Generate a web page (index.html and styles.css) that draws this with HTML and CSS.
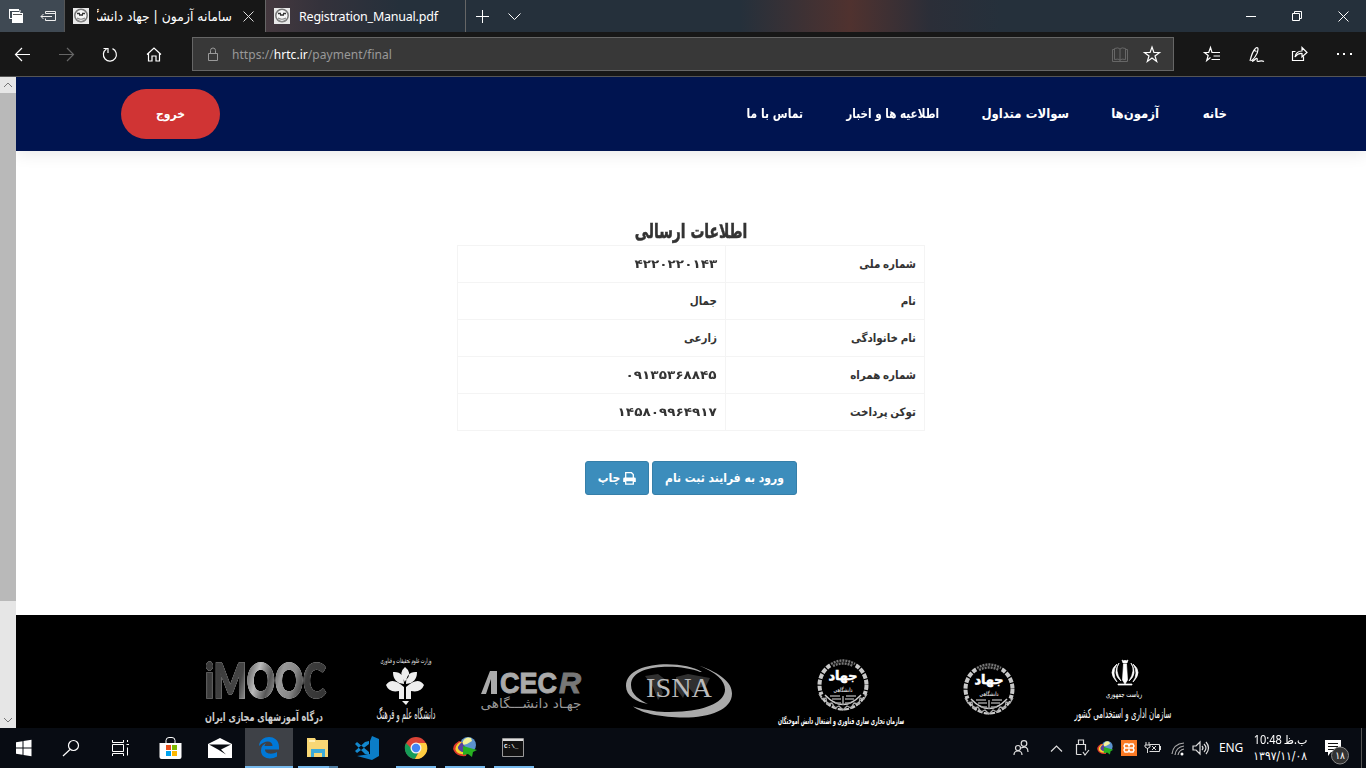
FILE: index.html
```html
<!DOCTYPE html>
<html lang="fa">
<head>
<meta charset="utf-8">
<title>سامانه آزمون | جهاد دانشگاهی</title>
<link rel="stylesheet" href="styles.css">
</head>
<body>
<svg class="defs" width="0" height="0">
  <defs>
    <g id="seal" fill="none" stroke="#ddd">
      <circle cx="25" cy="25" r="23.5" stroke-width="4" stroke-dasharray="5 1.2" pathLength="148" stroke="#c9c9c9"/>
      <path d="M12 5Q25-2 38 5" stroke="#000" stroke-width="6"/>
      <path d="M13 4Q25-3 37 4M15 6Q25 1 35 6" stroke="#777" stroke-width="2.4" stroke-dasharray="2 1"/>
      <path d="M3 35Q25 62 47 35L43 33Q25 53 7 33Z" fill="#000" stroke="none"/>
      <path d="M1 34l3 5 4-1 1 6 5-1 3 5 4-2 4 4 4-4 4 2 3-5 5 1 1-6 4 1 3-5" stroke="#aaa" stroke-width="1.3"/>
      <path d="M7 35Q25 54 43 35" stroke="#ccc" stroke-width="1.5"/>
      <path d="M12 36h10M28 36h10M14 39h9M27 39h9M17 43h6M27 43h6M25 36v9" stroke="#999" stroke-width="1.600"/>
      <text x="25" y="20" text-anchor="middle" textLength="29" lengthAdjust="spacingAndGlyphs" font-size="13" font-weight="bold" fill="#fff" stroke="#fff" stroke-width=".5">جهاد</text>
      <text x="25" y="32" text-anchor="middle" textLength="19" lengthAdjust="spacingAndGlyphs" font-size="6" font-weight="bold" fill="#ccc" stroke="none">دانشگاهی</text>
    </g>
    <g id="fav">
      <rect width="16" height="16" fill="#e9e9e9"/>
      <circle cx="8" cy="7.5" r="6.2" fill="#f6f6f6" stroke="#777" stroke-width="1.5"/>
      <path d="M4 5.500h3M9 5.500h3M6 7h4" stroke="#333" stroke-width="1.400"/>
      <path d="M4 10q4 2.500 8 0M4 12.500q4 2 8 0" stroke="#888" fill="none" stroke-width="1.200"/>
    </g>
    <g id="idm">
      <circle cx="15" cy="8" r="8" fill="#5b93cf"/>
      <path d="M10 4q3-5 8-3l1 3-5 3-4 1z" fill="#f4f29a"/>
      <path d="M6 4Q-2 9 1 14q3 6 12 5l1-4Q4 14 9 5z" fill="#e03a2c"/>
      <path d="M7 5Q1 9 3 14q3 4 10 3v-3Q6 12 10 5z" fill="#f4d530"/>
      <path d="M9 5Q3 10 6 13q3 3 7 2V11L10 7z" fill="#5a3fa0"/>
      <path d="M10 9l14 4-4 2-1 5-4-3-5 1z" fill="#27b021"/>
    </g>
  </defs>
</svg>

<div class="tabbar">
  <svg class="tab-tools" width="64" height="32" fill="none" stroke="#fff">
    <path d="M9 9h10v2H9zM12 13h11v10H12z" fill="#fff" stroke="none"/><path d="M9.500 10v8.500H12M12 12.500h8V10M13 15h9" /><path d="M13 14.500h9" stroke="#555"/>
    <path d="M45.500 13.500v-2h10v9h-10v-2M45.500 13.500h10M52 16.500H41M43.500 14L41 16.500l2.500 2.500" stroke="#eee"/>
  </svg>
  <div class="tab tab-active">
    <svg width="16" height="16"><use href="#fav"/></svg>
    <span class="tab-fa" dir="rtl">سامانه آزمون | جهاد دانشگاهی</span>
    <svg class="tab-close" width="11" height="11" stroke="#ddd"><path d="M.5.5l10 10M10.500.5l-10 10"/></svg>
  </div>
  <div class="tab tab-idle">
    <svg width="16" height="16"><use href="#fav"/></svg>
    <span class="tab-name">Registration_Manual.pdf</span>
  </div>
  <svg width="80" height="32" viewBox="466 0 80 32" fill="none" stroke="#fff"><path d="M482.500 10v13M476 16.500h13M508.500 13.500l6 6 6-6"/></svg>
  <svg class="win" width="140" height="32" viewBox="1226 0 140 32" fill="none" stroke="#fff"><path d="M1246 16.500h10M1292.500 13.500h7v7h-7zM1294.500 13v-1.500h7v7H1300M1338.500 11.500l10 10M1348.500 11.500l-10 10"/></svg>
</div>

<div class="toolbar">
  <svg width="192" height="44" viewBox="0 32 192 44" fill="none" stroke="#fff" stroke-width="1.200">
    <path d="M30 54.500H16M22 48l-6.500 6.500L22 61"/>
    <path d="M59 54.500h14M67 48l6.500 6.500L67 61" stroke="#666"/>
    <path d="M112.500 48.600a6.500 6.500 0 1 1-6 .4M103.500 48.500h4.500v4.500"/>
    <path d="M147 54.500l7-6.500 7 6.500M148.500 53.500v7.500h3.500v-5h4v5h3.500v-7.500"/>
  </svg>
  <div class="address">
    <svg width="39" height="32" viewBox="193 38 39 32" fill="none" stroke="#999"><path d="M208.500 53.500h9v7h-9zM210.500 53v-2.500q0-2.500 2.500-2.500t2.500 2.500V53"/></svg>
    <span class="url">https://<b>hrtc.ir</b>/payment/final</span>
    <svg class="addr-tools" width="64" height="32" viewBox="1109 38 64 32" fill="none" stroke="#666">
      <path d="M1114 49.500h-1.500v12h15v-12h-1.500M1114.500 48.500q4-1.500 5.500.5 1.500-2 5.500-.5v11q-4-1-5.500.5-1.500-1.500-5.500-.5zM1120 49v12"/>
      <path d="M1152 47l1.900 5.500h5.600l-4.500 3.400 1.700 5.600-4.700-3.400-4.700 3.400 1.700-5.600-4.500-3.400h5.600z" stroke="#fff" stroke-width="1.200"/>
    </svg>
  </div>
  <svg width="192" height="44" viewBox="1174 32 192 44" fill="none" stroke="#fff" stroke-width="1.200">
    <path d="M1213 52.500h-1l-1.500-5-1.800 5h-4.200l3.700 3-1.500 5 3.800-3M1212 52.500h8M1213.500 56h6.500M1211.500 59.500h8.500"/>
    <path d="M1251 60.500c2 0 7-7 7-11 0-3-2-2-3-.5-3 3-4 8-5 12M1254.500 50.500l2 1M1252 61.500c3-1 4-4 5-3s-1 3 1 3 3-1.500 6 0" stroke-width="1.200"/>
    <path d="M1295.500 51.500h-3v9h11v-4M1295 57q1-6 7-6v-3.500l5 5-5 4.500v-3.500q-4-.5-7 3.500z"/>
    <path d="M1337 54h2M1343 54h2M1350 54h2" stroke-width="2"/>
  </svg>
</div>

<div class="view">
  <div class="scrollbar">
    <svg width="16" height="16" fill="none" stroke="#777"><path d="M4 10l4-4 4 4"/></svg>
    <div class="thumb"></div>
    <svg width="16" height="16" fill="none" stroke="#777"><path d="M4 6l4 4 4-4"/></svg>
  </div>
  <div class="page" dir="rtl">
    <header class="header">
      <nav class="nav">
        <a class="n1">خانه</a><a class="n2">آزمون‌ها</a><a class="n3">سوالات متداول</a><a class="n4">اطلاعیه ها و اخبار</a><a class="n5">تماس با ما</a>
      </nav>
      <a class="logout">خروج</a>
    </header>
    <main class="main">
      <h1 class="title">اطلاعات ارسالی</h1>
      <table class="info">
        <tr><td>شماره ملی</td><td><span class="num">۴۲۲۰۲۲۰۱۴۳</span></td></tr>
        <tr><td>نام</td><td>جمال</td></tr>
        <tr><td>نام خانوادگی</td><td>زارعی</td></tr>
        <tr><td>شماره همراه</td><td><span class="num">۰۹۱۳۵۳۶۸۸۴۵</span></td></tr>
        <tr><td>توکن پرداخت</td><td><span class="num">۱۴۵۸۰۹۹۶۴۹۱۷</span></td></tr>
      </table>
      <div class="actions">
        <a class="btn btn-wide">ورود به فرایند ثبت نام</a>
        <a class="btn btn-print"><svg width="13" height="13" fill="none" stroke="#fff" stroke-width="1.300"><path d="M2.700 6V.7h5.800l1.800 1.800V6M2.700 8.500h7.600v3.700H2.700z"/><path d="M.2 10V6.800Q.2 5.500 1.500 5.500h10q1.300 0 1.300 1.300V10h-2.500V8H2.700v2z" fill="#fff" stroke="none"/></svg><span>چاپ</span></a>
      </div>
    </main>
    <footer class="footer" dir="ltr">
      <svg width="150" height="113" viewBox="200 615 150 113">
        <defs><linearGradient id="mg" gradientUnits="userSpaceOnUse" x1="205" y1="665" x2="327" y2="700"><stop offset="0" stop-color="#383838"/><stop offset=".3" stop-color="#444"/><stop offset=".42" stop-color="#bbb"/><stop offset=".52" stop-color="#555"/><stop offset=".6" stop-color="#999"/><stop offset=".7" stop-color="#888"/><stop offset=".8" stop-color="#3c3c3c"/><stop offset="1" stop-color="#333"/></linearGradient></defs>
        <text class="mooc" x="205" y="698" font-size="47" textLength="121" lengthAdjust="spacingAndGlyphs" fill="url(#mg)" stroke="url(#mg)" stroke-width="1.500">iMOOC</text>
        <text x="264" y="721" text-anchor="middle" font-size="12" font-weight="bold" textLength="118" lengthAdjust="spacingAndGlyphs" fill="#ccc">درگاه آموزشهای مجازی ایران</text>
      </svg>
      <svg width="110" height="113" viewBox="350 615 110 113" fill="#eee">
        <text x="406" y="663" text-anchor="middle" font-size="7" textLength="51" lengthAdjust="spacingAndGlyphs">وزارت علوم تحقیقات و فناوری</text>
        <path d="M405 667q8 6 1 13-1 1-1 2-1-1-1-2-6-7 1-13zM393 672q11-1 11 12-11-1-11-12zM417 672q-11-1-11 12 11-1 11-12zM386 685q6-9 18 2v12h-5v-8q-10 2-13-6zM424 685q-6-9-18 2v12h5v-8q10 2 13-6zM402 701h7l-3 4z"/>
        <text x="406" y="719" text-anchor="middle" font-size="14" textLength="59" lengthAdjust="spacingAndGlyphs">دانشگاه علم و فرهنگ</text>
      </svg>
      <svg width="140" height="113" viewBox="460 615 140 113" fill="#aaa">
        <path d="M481 694l9-23h7v23h-6v-15l-5 15z"/>
        <text x="500" y="693" font-size="30" font-weight="bold" font-family="Liberation Sans" textLength="57" lengthAdjust="spacingAndGlyphs" stroke="#aaa">CEC</text>
        <text x="559" y="693" font-size="30" font-weight="bold" font-style="italic" font-family="Liberation Sans" textLength="22" lengthAdjust="spacingAndGlyphs" fill="#777" stroke="#777">R</text>
        <text x="531" y="708" text-anchor="middle" font-size="13" textLength="101" lengthAdjust="spacingAndGlyphs" fill="#999">جهـاد  دانشـــگاهی</text>
      </svg>
      <svg width="155" height="113" viewBox="600 615 155 113">
        <path d="M702 672C684 660 626 660 626 686c0 10 10 16 22 18-8-4-17-9-17-19 0-22 50-21 69-13z" fill="#aaa"/>
        <path d="M699 665.500c22 8 33 17 33 28 0 16-22 24-48 24-22 0-42-4-51-11 20 6 34 6 49 5 26-2 43-10 43-22 0-9-9-17-26-24z" fill="#aaa"/>
        <path d="M645 676l13-2 8 6-7 4 4 9-5 7-5-13zM676 677l12-3 22 4-4 8-8 2-2 8-8-9-5 11-7-10z" fill="#303030"/>
        <text x="646" y="697" font-family="Liberation Serif" font-size="28" textLength="66" lengthAdjust="spacingAndGlyphs" fill="#bbb">ISNA</text>
      </svg>
      <svg width="175" height="113" viewBox="755 615 175 113"><use href="#seal" x="818" y="660"/><text x="841" y="724" text-anchor="middle" font-size="9" font-weight="bold" textLength="126" lengthAdjust="spacingAndGlyphs" fill="#fff">سازمان تجاری سازی فناوری و اشتغال دانش آموختگان</text></svg>
      <svg width="115" height="113" viewBox="930 615 115 113"><use href="#seal" x="964" y="664"/></svg>
      <svg width="155" height="113" viewBox="1045 615 155 113" fill="#fff">
        <path d="M1122 660l2 1 1-1 1 1 2-1-1 3h-4zM1123.500 664h3l1 16-2.500 4-2.500-4zM1119 663q-5 7 2 18-9-7-2-18zM1131 663q5 7-2 18 9-7 2-18zM1117 664q-10 8 0 18-6-9 0-18zM1133 664q10 8 0 18 6-9 0-18zM1118 684h14v1h-14z" stroke="#fff" stroke-width=".7"/>
        <text x="1124" y="697" text-anchor="middle" font-size="8" textLength="36" lengthAdjust="spacingAndGlyphs">ریاست جمهوری</text>
        <text x="1123" y="718" text-anchor="middle" font-size="13" textLength="97" lengthAdjust="spacingAndGlyphs">سازمان اداری و استخدامی کشور</text>
      </svg>
    </footer>
  </div>
</div>

<div class="taskbar">
  <svg width="147" height="40" viewBox="0 728 147 40" fill="none" stroke="#fff" stroke-width="1.200">
    <path d="M16 742.200l6.500-1v6.300H16zM23.500 741l8-1.200v7.700h-8zM16 748.500h6.500v6.300l-6.500-1zM23.500 748.500h8v7.700l-8-1.200z" fill="#fff" stroke="none"/>
    <circle cx="73.500" cy="745.500" r="5"/><path d="M70 749.500l-7 6.500"/>
    <path d="M112.500 744.500h11v7h-11zM112.500 740v2.500h11V740M112.500 756v-2.500h11v2.500M127.500 740v2M127.500 747.500v8M126.500 744.500h2.500" stroke-width="1"/>
  </svg>
  <svg width="49" height="40" viewBox="147 728 49 40"><path d="M160 743h22v14q0 2-2 2h-18q-2 0-2-2z" fill="#fff" transform="translate(-.5 0)"/><path d="M166 743v-2.500q0-3 3-3h3q3 0 3 3v2.500" fill="none" stroke="#fff"/><path d="M166 745h5v5h-5z" fill="#e94f1d"/><path d="M172 745h5v5h-5z" fill="#7eb900"/><path d="M166 751h5v5h-5z" fill="#00a3ee"/><path d="M172 751h5v5h-5z" fill="#feb800"/></svg>
  <svg width="49" height="40" viewBox="196 728 49 40"><path d="M208 744l12-6 12 6v14h-24z" fill="#fff"/><path d="M209 744.500h22l-10 5 5 5-8-5z" fill="#090c12"/></svg>
  <div class="task task-active"><svg width="48" height="40" viewBox="245 728 48 40"><path d="M259 746c1-12 20-12 20 1v2.500h-14c0 5 8 5 12 2.500v4.500c-6 3.500-16 2.500-16-6 0-4 2-6 5-7.500-1 1-1.500 2-1.500 3h8c0-6-8-6-13.500 0z" fill="#0078d7"/></svg></div>
  <div class="task task-split"><svg width="49" height="40" viewBox="293 728 49 40"><path d="M307 738h8l1 2h12v17h-21z" fill="#f8d775"/><path d="M309 740h6v2h-6z" fill="#fff0b5"/><path d="M311 749h14v8h-3v-4h-8v4h-3z" fill="#3cabd9"/></svg></div>
  <svg width="49" height="40" viewBox="342 728 49 40"><path d="M372 736l7 3v17l-7 4-15-4 13-2v-13z" fill="#0b7dc7"/><path d="M355 744l2-2 12 10v3l-4-1zM355 751l2 2 12-9v-3l-4 1z" fill="#1389cf"/></svg>
  <div class="task task-run"><svg width="49" height="40" viewBox="391 728 49 40"><circle cx="416" cy="748" r="11" fill="#db4437"/><path d="M406 743a11 11 0 0 0 9 16l4-8-3-1-5-2z" fill="#169c58"/><path d="M416 743h10a11 11 0 0 1-11 16l5-9z" fill="#ffcd40"/><circle cx="416" cy="748" r="5.500" fill="#f1f1f1"/><circle cx="416" cy="748" r="4.200" fill="#4285f4"/></svg></div>
  <div class="task task-run"><svg width="49" height="40" viewBox="440 728 49 40"><use href="#idm" x="453" y="737"/></svg></div>
  <div class="task task-run"><svg width="49" height="40" viewBox="489 728 49 40"><path d="M502.500 738.500h21v18h-21z" fill="#111" stroke="#999"/><path d="M503 739h20v2h-20z" fill="#ddd"/><text x="504" y="748" font-size="6" font-family="Liberation Mono" font-weight="bold" fill="#fff">C:\_</text></svg></div>

  <svg class="tray" width="216" height="40" viewBox="1000 728 216 40" fill="none" stroke="#ddd" stroke-width="1.200">
    <circle cx="1018" cy="748" r="2.500"/><circle cx="1024" cy="743.500" r="2.800"/><path d="M1014 755q0-4 4-4t4 4M1021 748q7-3 7 4"/>
    <path d="M1051 751.500l5.500-5.500 5.500 5.500"/>
    <path d="M1078.500 744v-4h5v4M1076.500 754.500v-10h9v6M1076.500 754.500h5M1083 752l2 3 4-5"/>
    <use href="#idm" transform="translate(1097 741) scale(.68)" stroke="none"/>
    <path d="M1121 740h16v16h-16z" fill="#fb7a24" stroke="none"/><path d="M1125 744h3l1 2 1-2h3l1 2-1 2 1 2-1 2h-3l-1-2-1 2h-3l-1-2 1-2-1-2zM1125 748h8" stroke="#fff" stroke-width="1.500"/>
    <path d="M1149.500 744.500h10v7h-10M1160.500 746v4M1146 742v3M1149 742v3M1145 745h5v2q-2.500 3-5 0zM1147.500 748v5M1152 746l4 4M1156 746l-4 4" stroke-width="1"/>
    <path d="M1172 754q1-10 12-11M1175 755q1-8 9-9M1178 755q1-5 6-6" stroke="#aaa"/><circle cx="1182" cy="754" r="1.500" fill="#fff" stroke="none"/>
    <path d="M1193 746h3l4-4v12l-4-4h-3zM1202 746q2 2 0 4M1204 744q4 4 0 8M1206 742q5 6 0 12"/>
  </svg>
  <span class="lang">ENG</span>
  <div class="clock"><span class="time">10:48 ب.ظ</span><span class="date">۱۳۹۷/۱۱/۰۸</span></div>
  <svg width="53" height="40" viewBox="1313 728 53 40"><path d="M1325 740h16v12h-10l-3 4v-4h-3z" fill="#fff"/><path d="M1328 743.500h10M1328 746.500h10M1328 749.500h6" stroke="#111"/><circle cx="1340" cy="755.500" r="8.500" fill="#333" stroke="#888"/><text x="1340" y="759" text-anchor="middle" font-size="10" fill="#fff">۱۸</text><path d="M1361.500 728v40" stroke="#555"/></svg>
</div>
</body>
</html>
```
FILE: styles.css
```css
* { box-sizing: border-box; }
body {
  margin: 0;
  width: 1366px;
  height: 768px;
  overflow: hidden;
  display: flex;
  flex-direction: column;
  font-family: "DejaVu Sans Condensed", "DejaVu Sans", sans-serif;
  font-stretch: condensed;
  background: #fff;
}
svg { display: block; flex: none; }
.defs { position: absolute; }
.tabbar {
  height: 32px;
  flex: none;
  display: flex;
  background: linear-gradient(90deg, #3f4953 0, #3f4953 60px, #45393f 265px, #34323b 320px, #25303b 400px, #25303b 740px, #50322f 850px, #2b2e38 930px, #25303b 1000px);
}
.tab { display: flex; align-items: center; width: 200px; padding-left: 8px; color: #fff; }
.tab-active { width: 201px; border-left: 1px solid #555; background: #171717; }
.tab-idle { border-left: 1px solid #666; border-right: 1px solid #666; width: 201px; }
.tab-fa { width: 135px; margin-left: 8px; overflow: hidden; white-space: nowrap; font-size: 13.800px; }
.tab-close { margin-left: 11px; }
.tab-name { margin-left: 9px; font: 12.500px "Noto Sans", sans-serif; letter-spacing: -.22px; white-space: nowrap; }
.win { margin-left: auto; }
.toolbar { height: 45px; flex: none; display: flex; background: #171717; border-bottom: 1px solid #555; }
.address { width: 982px; height: 34px; margin-top: 5px; display: flex; align-items: center; background: #383838; border: 1px solid #666; }
.url { font: 12px "Noto Sans", sans-serif; letter-spacing: .05px; color: #999; }
.url b { font-weight: normal; color: #fff; }
.addr-tools { margin-left: auto; }
.view { height: 651px; flex: none; display: flex; }
.scrollbar { width: 16px; background: #e6e6e6; display: flex; flex-direction: column; }
.thumb { height: 508px; margin-bottom: 111px; background: #b9b9b9; }
.page { width: 1350px; display: flex; flex-direction: column; overflow: hidden; }
.header {
  height: 74px;
  flex: none;
  display: flex;
  align-items: center;
  justify-content: space-between;
  padding: 0 139px 0 105px;
  background: #001450;
  color: #fff;
  box-shadow: 0 2px 16px rgba(0, 0, 0, .1);
  font-size: 13px;
  font-weight: bold;
}
.nav { display: flex; gap: 43px; white-space: nowrap; margin-top: -2px; }
.nav a { display: block; }
.n1 { width: 25px; }
.n2 { width: 47px; }
.n3 { width: 87px; }
.n4 { width: 93px; transform: scaleX(.89); transform-origin: right; }
.n5 { width: 57px; transform: scaleX(.92); transform-origin: right; }
.logout { width: 99px; height: 50px; border-radius: 25px; background: #d03434; display: flex; align-items: center; justify-content: center; font-size: 12px; }
.main { height: 464px; flex: none; display: flex; flex-direction: column; align-items: center; padding-top: 64px; color: #333; }
.title { height: 30px; margin: 0; font-size: 20px; line-height: 32px; white-space: nowrap; transform: scaleX(.77); -webkit-text-stroke: .5px #333; }
.info { width: 468px; border-collapse: collapse; table-layout: fixed; font-size: 11.500px; word-spacing: -1px; }
.info td { height: 37px; padding: 0 8px; border: 1px solid #f4f4f4; font-weight: bold; white-space: nowrap; }
.info td:first-child { width: 199px; }
.num { display: inline-block; font-size: 12px; transform: scaleX(1.13); transform-origin: right; font-family: "DejaVu Sans", sans-serif; font-stretch: normal; }
.actions { display: flex; gap: 3px; margin-top: 30px; }
.btn { height: 34px; display: flex; align-items: center; justify-content: center; gap: 3px; background: #3c8dbc; border: 1px solid #367fa9; border-radius: 3px; color: #fff; font-size: 12px; font-weight: bold; white-space: nowrap; }
.btn-wide { width: 145px; }
.btn-print { width: 64px; }
.footer { height: 113px; flex: none; display: flex; padding-left: 184px; background: #000; }
.mooc { font-family: Lato, sans-serif; font-weight: 900; filter: drop-shadow(0 0 .7px #fff); }
.taskbar { height: 40px; flex: none; display: flex; background: #080c13; color: #fff; }
.task-active { width: 48px; background: #3e4147 linear-gradient(#76b9ed, #76b9ed) 0 38px / 48px 2px no-repeat; }
.task-split, .task-run { width: 49px; }
.task-run { background: linear-gradient(#76b9ed, #76b9ed) 5px 38px / 40px 2px no-repeat; }
.task-split { background: linear-gradient(90deg, #76b9ed 31px, #4f7da2 31px) 5px 38px / 40px 2px no-repeat; }
.tray { margin-left: auto; }
.lang { width: 32px; font: 12px/40px "Noto Sans", sans-serif; padding-left: 3px; letter-spacing: -.2px; }
.clock { width: 65px; padding: 3px 6px 0 0; display: flex; flex-direction: column; align-items: flex-end; font: 12px/17px "Noto Sans", "DejaVu Sans", sans-serif; white-space: nowrap; letter-spacing: -.8px; word-spacing: -1px; }
.time { transform: scaleX(.92); transform-origin: right; }
.date { font-family: "DejaVu Sans Condensed", "DejaVu Sans", sans-serif; font-size: 12px; }
```
